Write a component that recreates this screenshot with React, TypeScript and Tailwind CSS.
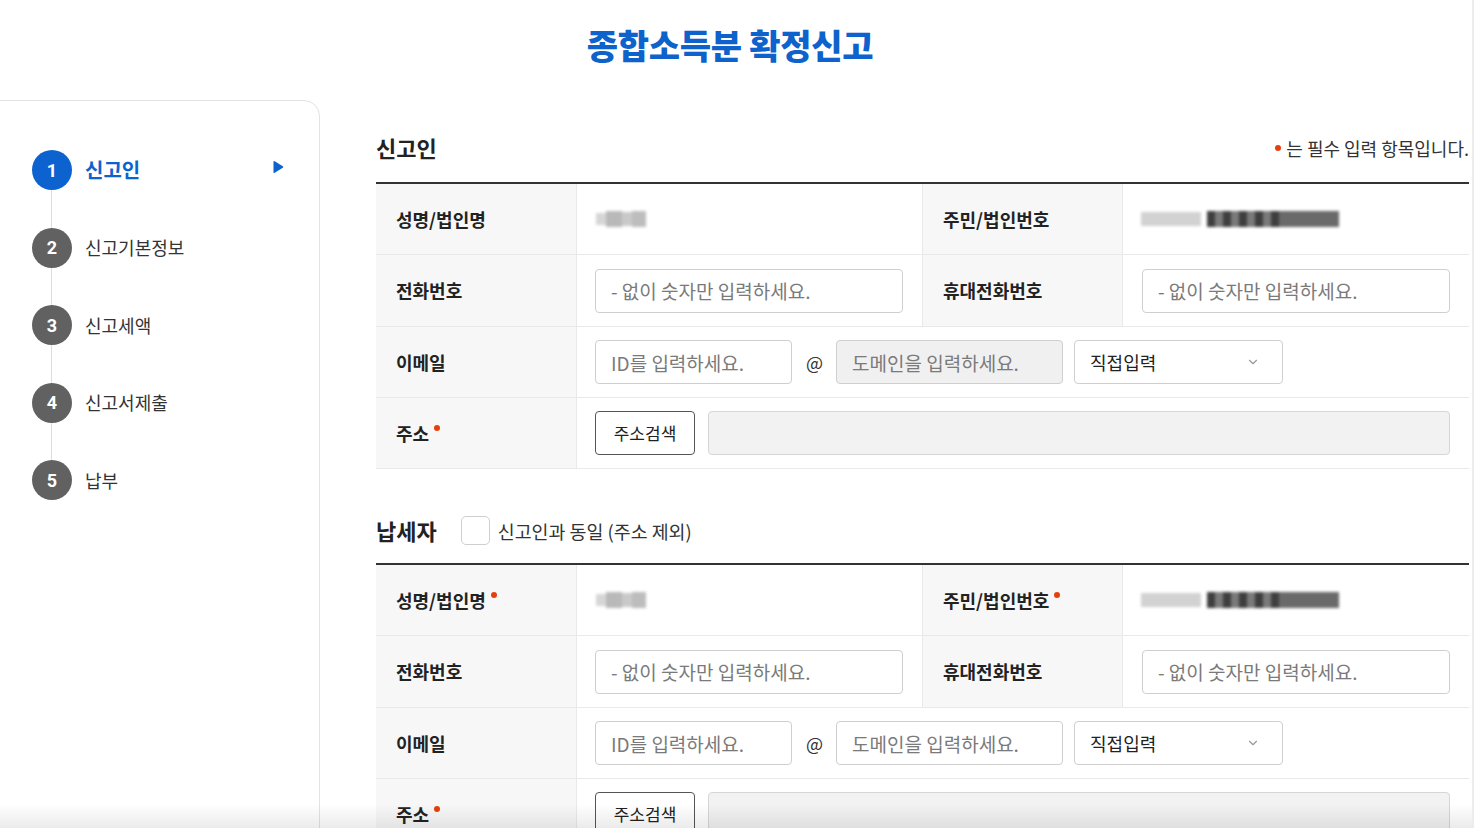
import { ChevronDown } from 'lucide-react';

const FONT = { fontFamily: '"Noto Sans CJK KR", "Noto Sans", sans-serif' };

const STEPS = ['신고인', '신고기본정보', '신고세액', '신고서제출', '납부'];

const RequiredDot = () => <span className="ml-[5px] -mt-[10px] inline-block size-[6px] rounded-full bg-[#e5400b]" />;

const Label = ({ text, required, border }: { text: string; required?: boolean; border?: boolean }) => (
  <div
    className={`flex h-full items-center bg-[#f7f7f7] pl-[20px] text-[18px] font-bold text-[#222] ${
      border ? 'border-l border-[#e9e9e9]' : ''
    }`}
  >
    <span>{text}</span>
    {required && <RequiredDot />}
  </div>
);

const TextInput = ({ placeholder, className = '' }: { placeholder: string; className?: string }) => (
  <input
    placeholder={placeholder}
    className={`h-[44px] rounded-[4px] border border-[#cfcfcf] px-[15px] text-[19px] text-[#222] outline-none placeholder:text-[#7a7a7a] ${className}`}
    style={FONT}
  />
);

const BlurName = () => (
  <div className="flex h-[17px] w-[52px] items-center blur-[1.5px]">
    <span className="h-[12px] w-[10px] bg-[#d6d6d6]" />
    <span className="h-[16px] w-[16px] bg-[#b9b9b9]" />
    <span className="h-[14px] w-[10px] bg-[#c9c9c9]" />
    <span className="h-[16px] w-[14px] bg-[#bdbdbd]" />
  </div>
);

const BlurId = () => (
  <div className="flex h-[18px] items-center blur-[1.5px]">
    <span className="h-[14px] w-[60px] bg-[#d2d2d2]" />
    <span className="ml-[6px] flex h-[16px] w-[132px] bg-[#6a6a6a]">
      {Array.from({ length: 9 }).map((_, i) => (
        <span key={i} className="h-full w-[8px] odd:bg-[#3e3e3e] even:bg-[#7a7a7a]" />
      ))}
    </span>
  </div>
);

const Table = ({ requiredTop, domainDisabled }: { requiredTop?: boolean; domainDisabled?: boolean }) => (
  <div className="border-t-2 border-[#333]">
    <div className="grid h-[71px] grid-cols-[200px_346px_200px_347px] border-b border-[#e9e9e9]">
      <Label text="성명/법인명" required={requiredTop} />
      <div className="flex items-center border-l border-[#e9e9e9] pl-[19px]">
        <BlurName />
      </div>
      <Label text="주민/법인번호" required={requiredTop} border />
      <div className="flex items-center border-l border-[#e9e9e9] pl-[18px]">
        <BlurId />
      </div>
    </div>
    <div className="grid h-[72px] grid-cols-[200px_346px_200px_347px] border-b border-[#e9e9e9]">
      <Label text="전화번호" />
      <div className="flex items-center border-l border-[#e9e9e9] pl-[18px]">
        <TextInput placeholder="- 없이 숫자만 입력하세요." className="w-[308px]" />
      </div>
      <Label text="휴대전화번호" border />
      <div className="flex items-center border-l border-[#e9e9e9] pl-[19px]">
        <TextInput placeholder="- 없이 숫자만 입력하세요." className="w-[308px]" />
      </div>
    </div>
    <div className="grid h-[71px] grid-cols-[200px_1fr] border-b border-[#e9e9e9]">
      <Label text="이메일" />
      <div className="flex items-center border-l border-[#e9e9e9] pl-[18px]">
        <TextInput placeholder="ID를 입력하세요." className="w-[197px]" />
        <span className="ml-[14px] mr-[13px] text-[18px] text-[#333]">@</span>
        <TextInput
          placeholder="도메인을 입력하세요."
          className={`w-[227px] ${domainDisabled ? 'bg-[#f0f0f0]' : 'bg-white'}`}
        />
        <div className="ml-[11px] flex h-[44px] w-[209px] items-center justify-between rounded-[4px] border border-[#cfcfcf] pl-[15px] pr-[22px]">
          <span className="text-[18px] text-[#222]">직접입력</span>
          <ChevronDown className="size-[14px] text-[#999]" strokeWidth={2} />
        </div>
      </div>
    </div>
    <div className="grid h-[71px] grid-cols-[200px_1fr] border-b border-[#e9e9e9]">
      <Label text="주소" required />
      <div className="flex items-center border-l border-[#e9e9e9] pl-[18px]">
        <button className="h-[44px] w-[100px] rounded-[4px] border border-[#555] bg-white text-[17px] text-[#222]" style={FONT}>
          주소검색
        </button>
        <div className="ml-[13px] h-[44px] w-[742px] rounded-[4px] border border-[#d6d6d6] bg-[#f2f2f2]" />
      </div>
    </div>
  </div>
);

export default function App() {
  return (
    <div className="relative h-[828px] w-[1474px] overflow-hidden border-r-2 border-[#ececec] bg-white" style={FONT}>
      <div className="flex h-[100px] items-center justify-center pb-[12px]">
        <h1 className="pr-[12px] text-[34px] font-extrabold tracking-[-0.3px] text-[#0d62cc]">종합소득분 확정신고</h1>
      </div>

      <div className="flex">
        <aside className="-ml-px h-[760px] w-[321px] shrink-0 rounded-tr-[16px] border border-[#e3e3e3] pt-[49px]">
          {STEPS.map((step, i) => (
            <div key={step}>
              <div className="flex items-center pl-[32px]">
                <span
                  className={`flex size-[40px] items-center justify-center rounded-full text-[18px] font-bold text-white ${
                    i === 0 ? 'bg-[#0c63cf]' : 'bg-[#616161]'
                  }`}
                  style={{ fontFamily: '"Roboto", sans-serif' }}
                >
                  {i + 1}
                </span>
                {i === 0 ? (
                  <>
                    <span className="ml-[13px] text-[20px] font-bold text-[#0c63cf]">{step}</span>
                    <svg className="ml-auto mr-[35px] -mt-[6px]" width="12" height="14" viewBox="0 0 12 14">
                      <path d="M1.5 1.8 Q1.5 0.5 2.7 1.2 L10.8 6.2 Q11.8 7 10.8 7.8 L2.7 12.8 Q1.5 13.5 1.5 12.2 Z" fill="#0c63cf" />
                    </svg>
                  </>
                ) : (
                  <span className="ml-[13px] text-[18px] text-[#333]">{step}</span>
                )}
              </div>
              {i < STEPS.length - 1 && <div className="ml-[51px] h-[37.5px] w-px bg-[#dcdcdc]" />}
            </div>
          ))}
        </aside>

        <main className="ml-[56px] w-[1093px]">
          <div className="flex h-[82px] items-center justify-between pt-[12px]">
            <h2 className="text-[22px] font-bold text-[#222]">신고인</h2>
            <p className="flex items-center pt-[2px] text-[18px] text-[#333]">
              <span className="mr-[5px] size-[6px] rounded-full bg-[#e5400b]" />는 필수 입력 항목입니다.
            </p>
          </div>
          <Table domainDisabled />

          <div className="flex h-[94px] items-center pt-[28px]">
            <h2 className="text-[22px] font-bold text-[#222]">납세자</h2>
            <span className="ml-[24px] size-[29px] rounded-[5px] border border-[#cfcfcf]" />
            <span className="ml-[8px] pt-[3px] text-[18.4px] text-[#333]">신고인과 동일 (주소 제외)</span>
          </div>
          <Table requiredTop />
        </main>
      </div>

      <div className="pointer-events-none absolute bottom-0 left-0 h-[24px] w-full bg-linear-to-b from-transparent to-black/[0.08]" />
    </div>
  );
}
